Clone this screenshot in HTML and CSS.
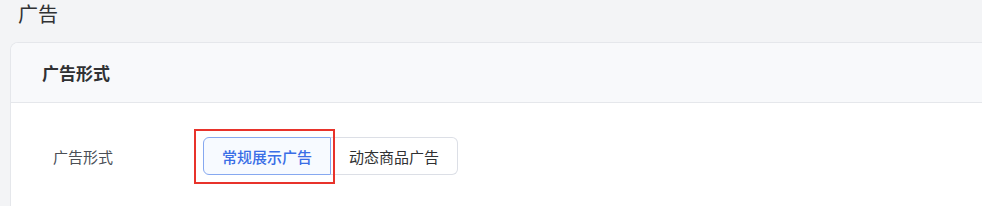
FILE: index.html
```html
<!DOCTYPE html>
<html lang="zh-CN">
<head>
  <meta charset="UTF-8">
  <meta name="viewport" content="width=device-width, initial-scale=1.0">
  <title>广告</title>
  <link rel="stylesheet" href="styles.css">
</head>
<body>
  <div class="page">
    <h1 class="page__title">广告</h1>
    <div class="card">
      <div class="card__header">广告形式</div>
      <div class="card__body">
        <div class="form-row">
          <label class="form-row__label">广告形式</label>
          <div class="radio-group">
            <span class="radio-group__mark">
              <button class="radio-btn radio-btn--active">常规展示广告</button>
            </span>
            <button class="radio-btn">动态商品广告</button>
          </div>
        </div>
      </div>
    </div>
  </div>
</body>
</html>
```

FILE: styles.css
```css
*{
  box-sizing: border-box;
}
body{
  margin:0;
  padding:0;
  background:#f3f4f6;
  font-family: "Noto Sans CJK SC", "Noto Sans", sans-serif;
  color:#303133;
  overflow:hidden;
}
.page{
  height:206px;
  overflow:hidden;
}
.page__title{
  margin:0 0 14px;
  padding-left:18px;
  font-size:20px;
  font-weight:400;
  line-height:28px;
  color:#303133;
}
.card{
  margin-left:10px;
  margin-right:-30px;
  height:164px;
  background:#fff;
  border:1px solid #e5e7eb;
  border-bottom:0;
  border-radius:8px 8px 0 0;
  overflow:hidden;
}
.card__header{
  height:60px;
  line-height:59px;
  padding-left:31px;
  font-size:17px;
  font-weight:700;
  background:#f8f9fb;
  border-bottom:1px solid #e5e7eb;
}
.form-row{
  display:flex;
  align-items:center;
  padding:34px 0 0 42px;
}
.form-row__label{
  width:150px;
  font-size:15px;
  color:#4b4f56;
}
.radio-group{
  display:flex;
}
.radio-group__mark{
  position:relative;
  display:flex;
}
.radio-group__mark::after{
  content:"";
  position:absolute;
  left:-9px;
  top:-8px;
  right:-4px;
  bottom:-9px;
  border:2px solid #e8332b;
  pointer-events:none;
}
.radio-btn{
  height:38px;
  padding:0 18px;
  font-family:inherit;
  font-size:15px;
  color:#303133;
  background:#fff;
  border:1px solid #dcdfe6;
  border-radius:0 6px 6px 0;
  border-left:0;
  cursor:pointer;
}
.radio-btn--active{
  position:relative;
  z-index:1;
  border:1px solid #86a8f0;
  border-radius:6px 0 0 6px;
  background:#f7faff;
  color:#3a6ee6;
  font-weight:500;
}
```
